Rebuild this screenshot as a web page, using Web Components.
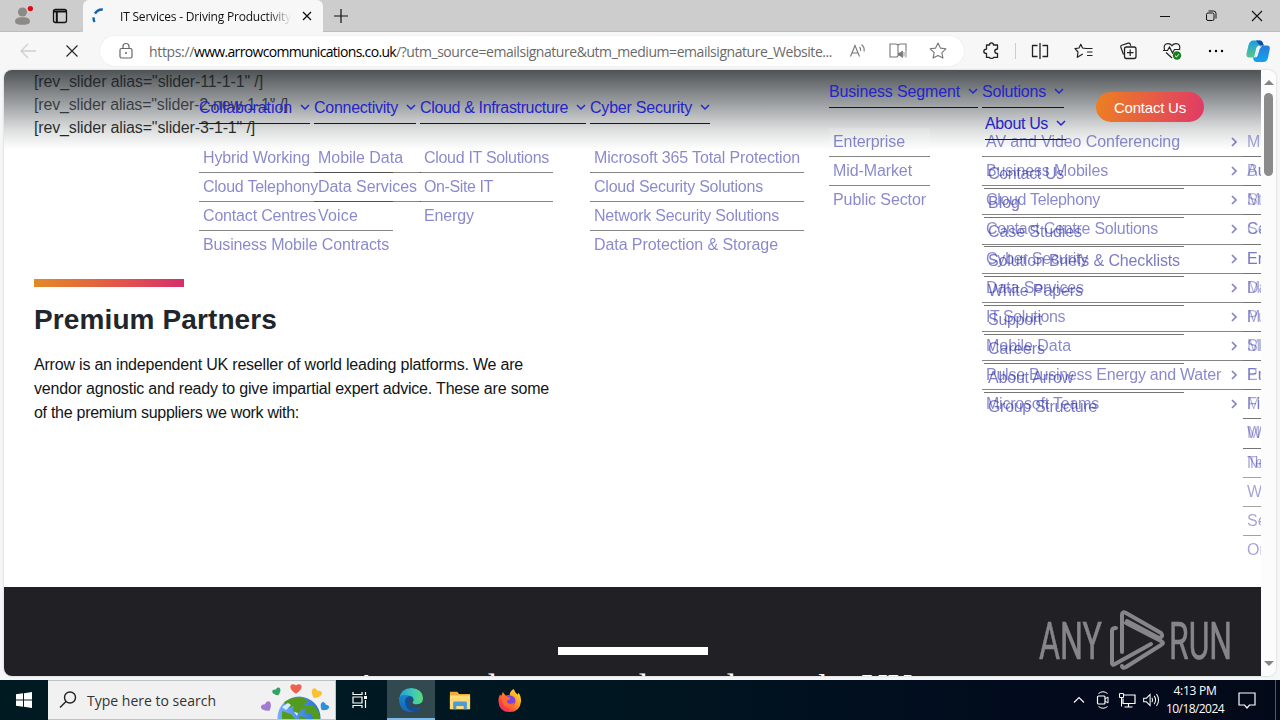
<!DOCTYPE html>
<html lang="en">
<head>
<meta charset="utf-8">
<title>IT Services - Driving Productivity</title>
<style>
    html, body {
        margin: 0;
        width: 1280px;
        height: 720px;
        overflow: hidden;
        background: #eef4f9;
        font-family: "Liberation Sans", Arial, sans-serif;
    }
</style>
</head>
<body>
<desktop-shell></desktop-shell>

<script>
const ICONS = {
    profile: '<circle cx="12" cy="8" r="5.2" fill="#8c8987"/><path d="M3.5 19c0-4 3-5 8.500-5s8.500 1 8.500 5c0 2.500-4 3.500-8.500 3.500S3.500 21.500 3.500 19z" fill="#8c8987"/><circle cx="21" cy="4" r="3" fill="#e30613"/>',
    tabs: '<rect x="5.500" y="5.500" width="13" height="13" rx="2" fill="none" stroke="#111" stroke-width="1.300"/><path d="M5.500 7.500h13M8.800 8v10" stroke="#111" stroke-width="2" fill="none"/>',
    spinner: '<path d="M7.800 18.500a9 9 0 0 1-1-5M8.300 9.500a9 9 0 0 1 8.500-4.500" transform="translate(1.500 0)" fill="none" stroke="#1464ad" stroke-width="2.700"/>',
    close: '<path d="M8 8l8 8M16 8l-8 8" stroke="#111" stroke-width="1.300"/>',
    stop: '<path d="M6 6l12 12M18 6L6 18" stroke="#222" stroke-width="1.200"/>',
    plus: '<path d="M12 5v14M5 12h14" stroke="#111" stroke-width="1.200"/>',
    min: '<path d="M7 12.500h10" stroke="#111"/>',
    restore: '<rect x="7.500" y="9" width="7.500" height="7.500" rx="1.500" fill="none" stroke="#111"/><path d="M9.500 7h5q2.500 0 2.500 2.500v5" fill="none" stroke="#111"/>',
    winclose: '<path d="M7 7l10 10M17 7L7 17" stroke="#111" stroke-width="1.100"/>',
    back: '<path d="M20 12H5M12 5l-7 7 7 7" fill="none" stroke="#cfcfcf" stroke-width="1.300"/>',
    lock: '<rect x="6" y="9.500" width="12" height="9.500" rx="1.500" fill="none" stroke="#666" stroke-width="1.200"/><path d="M9 9.500V7.500a3 3 0 0 1 6 0v2" fill="none" stroke="#666" stroke-width="1.200"/><circle cx="12" cy="14" r="1" fill="#666"/>',
    read: '<path d="M4.500 17.500L9 6.500l4.500 11M6 14h6M13.500 8q1.500 1.500 1 4M15.500 5.500q3.500 3 2.500 7" fill="none" stroke="#777" stroke-width="1.100"/>',
    book: '<path d="M12 6v11M12 6q-1-1-3-1H4v13h7l1-1M12 6q1-1 3-1h5v7" fill="none" stroke="#777" stroke-width="1.100"/><path d="M12.500 14h1.500l2.500-2v6.500L14 16.500h-1.500zM18 13v4.500M20 12v6.500" fill="#777" stroke="#777" stroke-width=".8"/>',
    star: '<path d="M12 4l2.400 5.100 5.500.7-4 3.800 1 5.500-4.900-2.700-4.900 2.700 1-5.500-4-3.800 5.500-.7z" fill="none" stroke="#777" stroke-width="1.100" stroke-linejoin="round"/>',
    puzzle: '<path d="M7.500 6h3q0-2.200 2-2.200T14.500 6h4v4q-2.700 0-2.700 2.200t2.700 2.200v4h-4q0 1-2 1t-2-1h-3v-4q-2.700 0-2.700-2t2.700-2.200z" fill="none" stroke="#222" stroke-width="1.300" stroke-linejoin="round"/>',
    split: '<path d="M9.500 6.500h-5v11h5M14.500 6.500h5v11h-5M12 4v16" fill="none" stroke="#222" stroke-width="1.300" stroke-linejoin="round"/>',
    favs: '<path d="M12.500 9.500h7M14 13h5.500M14 16.500h5.500M12.500 9.300l-3-.3L7.800 5.300 6 9l-4 .6L5 13l-.7 5.300 5.500-3.300" transform="translate(1 0)" fill="none" stroke="#222" stroke-width="1.200" stroke-linejoin="round"/>',
    collect: '<path d="M7.500 15.500L4.800 8.200q-.5-1.400 1-2l6.400-2q1.500-.4 2 1l.6 1.600" fill="none" stroke="#222" stroke-width="1.200"/><rect x="8.500" y="8" width="11.500" height="11.500" rx="2" fill="none" stroke="#222" stroke-width="1.300"/><path d="M14.200 10.500v6.500M11 13.700h6.500" stroke="#222" stroke-width="1.200"/>',
    heart: '<path d="M4.500 11q-1.500-6.300 3.500-6.300 2.500 0 4 2 1.500-2 4-2 5 0 3.500 6.300M6 13.500l6 5.500M3 11.500h4.500L9.500 8l3 6 2-3.500H20" fill="none" stroke="#222" stroke-width="1.200"/><circle cx="17" cy="16.500" r="4.200" fill="#16801c"/><path d="M15 16.700l1.500 1.300 2.500-2.800" stroke="#fff" fill="none"/>',
    dots: '<circle cx="6" cy="12" r="1.200"/><circle cx="12" cy="12" r="1.200"/><circle cx="18" cy="12" r="1.200"/>',
    copilot: '<path d="M7 1.500h7q2 0 2.700 2l1 3h-4q-2.700 0-3.500 3l-1.500 6.500q-.5 2.500-2.500 2.500H3Q0 18.500.5 14.500l2-8.500Q4 1.500 7 1.500z" fill="url(#ca)"/><path d="M17 6.500h4q3.500 0 2.700 4L22 18.500q-1 4.500-4.500 4.500H10q-2 0-2.700-3l-.3-1.500q2.500-.5 3-2l2-7Q14.500 6.500 17 6.500z" fill="url(#cb)"/><path d="M10 1.500h4q2 0 2.700 2l1 3h-4z" fill="#1b4b9e"/><path d="M13.700 7.500h2.500q-2 .5-2.700 3l-1.800 6q-.6 2-2.500 2H8q1.500-.5 2-2.500l1.500-6q.7-2.500 2.200-2.500z" fill="#f3f8fc"/><defs><linearGradient id="ca" x2="0" y2="1"><stop stop-color="#1b9de2"/><stop offset="1" stop-color="#54c987"/></linearGradient><linearGradient id="cb" x2="0" y2="1"><stop stop-color="#2b7bd8"/><stop offset="1" stop-color="#12a4ef"/></linearGradient></defs>',
    windows: '<path d="M4 6.300l7-1v6.200H4zM12 5.200l8-1.200v7.500h-8zM4 12.500h7v6.200l-7-1zM12 12.500h8V20l-8-1.200z" fill="#fff"/>',
    search: '<circle cx="14" cy="9.500" r="5.500" fill="none" stroke="#222" stroke-width="1.400"/><path d="M10 13.500L4 19.500" stroke="#222" stroke-width="1.500"/>',
    taskview: '<path d="M5 4v2.500h9V4M5 20v-2.500h9V20M5 9h9v6H5zM17.500 4v3M17.500 12v8" fill="none" stroke="#fff" stroke-width="1.200"/><path d="M16 8h3v3h-3z" fill="#fff"/>',
    edge: '<defs><linearGradient id="ea"><stop stop-color="#239ddf"/><stop offset=".65" stop-color="#42cdb0"/><stop offset="1" stop-color="#62d875"/></linearGradient><linearGradient id="eb" x2="0" y2="1"><stop stop-color="#1686cb"/><stop offset="1" stop-color="#1767b5"/></linearGradient></defs><path d="M0 11Q2 0 12.500 0 23.500 1 24 10q0 6-6 6.300-5 0-4.300-2.300Q16 11.500 13 9.500 8 6 0 11z" fill="url(#ea)"/><path d="M0 12q0-5 6-5 6.500 0 8 4-5-2-5 3 1 6.500 7.500 6.500 3 0 5-1.500-3.500 5-9.500 5Q1 24 0 12z" fill="url(#eb)"/><path d="M6 13q1-6 7-4.500l1.500 2.500q-5-1-5 3.500Q11 20 17 20.500q3 0 5-1.500-3 4.500-8.500 4.800Q6 21 6 13z" fill="#124f98"/>',
    folder: '<path d="M1 3h8l2 2.500h12V22H1z" fill="#efad34"/><path d="M1 7h22v15H1z" fill="#ffdb78"/><path d="M4.500 22v-7q0-1.500 1.500-1.500h12q1.500 0 1.500 1.500v7h-3.500v-3.500H8V22z" fill="#4e9bd3"/>',
    firefox: '<defs><linearGradient id="fa" x1="1" x2="0" y2="1"><stop stop-color="#fff044"/><stop offset=".4" stop-color="#ff9b1d"/><stop offset=".75" stop-color="#ff3b4a"/><stop offset="1" stop-color="#e3257b"/></linearGradient></defs><path d="M2 6l1.500 1L5 3l3 4q3-1 4 0 0-5 4.500-7 1 4 4 6l1-2q3 4 2.500 9-1 11-12 11T.5 13Q.3 9 2 6z" fill="url(#fa)"/><circle cx="12.500" cy="12.500" r="5.800" fill="#7b45dd"/><path d="M4 9q4-3 6.500-.3L13 9q-.5 2.500-3.500 3-.5 3 3 3.500 3 0 5-1.500-2 5.500-7 5.200Q4 18 4 9z" fill="#ff6a2c"/>',
    up: '<path d="M6 15l6-6 6 6" fill="none" stroke="#fff" stroke-width="1.300"/>',
    cam: '<rect x="6.500" y="8" width="7.500" height="8" rx="1" fill="none" stroke="#fff" stroke-width="1.200"/><path d="M14 11l3-2v6l-3-2M7.500 5.500q4.500-3.500 9 0M7.500 18.500q4.500 3.500 9 0" fill="none" stroke="#fff"/>',
    net: '<path d="M9 7h11v8.500H8v-5M13.500 15.500V19M9.500 19h8" fill="none" stroke="#fff" stroke-width="1.200"/><path d="M4.500 5.500h4v4h-4zM6.500 9.500v9" fill="none" stroke="#fff"/>',
    sound: '<path d="M4 10h3l4-4v12l-4-4H4zM13 9.500q1.500 2.500 0 5M15.500 7.500q3 4.500 0 9M18 5.500q4.500 6.500 0 13" fill="none" stroke="#fff" stroke-width="1.100"/>',
    note: '<path d="M4 5h16v12h-5.500L12 20l-2.500-3H4z" fill="none" stroke="#fff" stroke-width="1.200"/>'
};

class UiIcon extends HTMLElement {
    constructor() {
        super();
        this.attachShadow({mode: 'open'});
    }

    connectedCallback() {
        const size = this.getAttribute('size') || 24;
        this.shadowRoot.innerHTML = `
            <style>
                :host { display: flex; align-items: center; justify-content: center; flex: none; }
                svg { display: block; overflow: visible; }
            </style>
            <svg width="${size}" height="${size}" viewBox="0 0 24 24">${ICONS[this.getAttribute('name')]}</svg>
        `;
    }
}

// Text set to a known advance width by spreading the difference over its letters
class FitText extends HTMLElement {
    constructor() {
        super();
        this.attachShadow({mode: 'open'});
        this.shadowRoot.innerHTML = `
            <style>
                :host { display: block; white-space: nowrap; flex: none; }
                span { display: inline-block; white-space: pre; }
            </style>
            <span><slot></slot></span>
        `;
    }

    connectedCallback() {
        const w = parseFloat(this.getAttribute('w'));
        if (!w) return;
        this.style.width = w + 'px';
        const span = this.shadowRoot.querySelector('span');
        const n = this.textContent.length;
        span.style.letterSpacing = (w - span.getBoundingClientRect().width) / n + 'px';
    }
}

class TabStrip extends HTMLElement {
    constructor() {
        super();
        this.attachShadow({mode: 'open'});
        this.shadowRoot.innerHTML = `
            <style>
                :host { display: flex; height: 32px; background: #cdcdcd; font: 12px "Open Sans", "Noto Sans", sans-serif; }
                .left { display: flex; width: 83px; box-sizing: border-box; border-bottom: 1px solid #bcbcbc; border-radius: 0 0 5px 0; }
                .tab { display: flex; align-items: center; width: 240px; background: #f7f7f7; border-radius: 6px 6px 0 0; }
                .title { width: 173px; margin-left: 10px; color: #111; -webkit-mask: linear-gradient(90deg, #000 86%, transparent 99%); mask: linear-gradient(90deg, #000 86%, transparent 99%); }
                .rest { display: flex; flex: 1; border-bottom: 1px solid #bcbcbc; }
                .gap { flex: 1; }
            </style>
            <div class="left">
                <ui-icon name="profile" size="21" style="width:44px"></ui-icon>
                <ui-icon name="tabs" style="width:32px"></ui-icon>
            </div>
            <div class="tab">
                <ui-icon name="spinner" size="22" style="width:27px"></ui-icon>
                <div class="title"><fit-text w="171">IT Services - Driving Productivity</fit-text></div>
                <ui-icon name="close" style="width:28px"></ui-icon>
            </div>
            <div class="rest">
                <ui-icon name="plus" style="width:36px"></ui-icon>
                <div class="gap"></div>
                <ui-icon name="min" style="width:46px"></ui-icon>
                <ui-icon name="restore" style="width:46px"></ui-icon>
                <ui-icon name="winclose" style="width:46px"></ui-icon>
            </div>
        `;
    }
}

class ToolBar extends HTMLElement {
    constructor() {
        super();
        this.attachShadow({mode: 'open'});
        this.shadowRoot.innerHTML = `
            <style>
                :host { display: flex; align-items: center; height: 38px; box-sizing: border-box; padding-left: 6px; background: #f7f7f7; }
                ui-icon { width: 44px; }
                .address { display: flex; align-items: center; width: 864px; height: 30px; box-sizing: border-box; margin: 0 5px 0 6px; padding-left: 8px; background: #fff; border-radius: 15px; box-shadow: 0 0 2px #e4e4e4; font: 14px "Open Sans", "Noto Sans", sans-serif; color: #6a6a6a; }
                .address ui-icon { width: 40px; }
                .url { display: flex; width: 689px; margin-left: 5px; }
                .host { color: #000; }
                .sep { width: 1px; height: 16px; margin: 0 2px; background: #ccc; }
            </style>
            <ui-icon name="back"></ui-icon>
            <ui-icon name="stop" size="22"></ui-icon>
            <div class="address">
                <ui-icon name="lock" style="width:36px"></ui-icon>
                <div class="url">
                    <fit-text w="45">https://</fit-text><fit-text w="202" class="host">www.arrowcommunications.co.uk</fit-text><fit-text w="436">/?utm_source=emailsignature&amp;utm_medium=emailsignature_Website...</fit-text>
                </div>
                <ui-icon name="read"></ui-icon>
                <ui-icon name="book"></ui-icon>
                <ui-icon name="star"></ui-icon>
            </div>
            <ui-icon name="puzzle"></ui-icon>
            <div class="sep"></div>
            <ui-icon name="split"></ui-icon>
            <ui-icon name="favs"></ui-icon>
            <ui-icon name="collect"></ui-icon>
            <ui-icon name="heart"></ui-icon>
            <ui-icon name="dots"></ui-icon>
            <ui-icon name="copilot" style="width:40px"></ui-icon>
        `;
    }
}

// rows: "label:width" separated by "|"
class SubMenu extends HTMLElement {
    constructor() {
        super();
        this.attachShadow({mode: 'open'});
    }

    connectedCallback() {
        const arrows = this.hasAttribute('arrows');
        const rows = this.getAttribute('rows').split('|').map(row => {
            const [label, w] = row.split(':');
            return `<li><fit-text w="${w || 0}">${label.replace('&', '&amp;')}</fit-text>${arrows ? '<svg width="8" height="12" viewBox="0 0 8 12"><path d="M1 2l4 4-4 4" fill="none" stroke="#1c1ca8" stroke-width="1.700"/></svg>' : ''}</li>`;
        }).join('');
        this.shadowRoot.innerHTML = `
            <style>
                :host { display: block; position: absolute; opacity: .55; font-size: 16px; color: #2929a4; }
                ul { list-style: none; margin: 0; padding: 0; }
                li { display: flex; align-items: center; justify-content: space-between; height: 29.150px; box-sizing: border-box; padding: 0 4px; border-bottom: 1px solid #222; }
                li:last-child { border-bottom-color: transparent; }
            </style>
            <ul>${rows}</ul>
        `;
    }
}

class NavItem extends HTMLElement {
    constructor() {
        super();
        this.attachShadow({mode: 'open'});
        this.shadowRoot.innerHTML = `
            <style>
                :host { display: block; position: relative; flex: none; }
                .top { display: flex; align-items: center; gap: 8px; height: 32px; border-bottom: 1px solid #15191d; color: #2424c8; font-size: 16px; }
                .top fit-text { padding-top: 2px; }
            </style>
            <div class="top">
                <fit-text w="${this.getAttribute('w')}">${this.getAttribute('label').replace('&', '&amp;')}</fit-text>
                <svg width="10" height="8" viewBox="0 0 10 8"><path d="M1 2l4 4 4-4" fill="none" stroke="#2424c8" stroke-width="1.500"/></svg>
            </div>
            <slot></slot>
        `;
    }
}

class SiteHeader extends HTMLElement {
    constructor() {
        super();
        this.attachShadow({mode: 'open'});
        this.shadowRoot.innerHTML = `
            <style>
                :host { display: flex; align-items: flex-start; position: absolute; inset: 0 0 auto 0; height: 80px; background: linear-gradient(rgba(24,30,34,.77), rgba(90,96,101,.56) 45%, rgba(110,118,116,.22) 76%, rgba(255,255,255,0)); }
                nav { display: flex; gap: 4px; }
                .main { margin: 21px 0 0 195px; width: 511px; }
                .side { margin: 5px 0 0 119px; width: 235px; flex-wrap: wrap; gap: 0 4px; }
                .btn { display: flex; align-items: center; justify-content: center; width: 108px; height: 30px; margin: 22px 0 0 32px; border-radius: 15px; background: linear-gradient(100deg, #ec8021, #e03a67); color: #fff; font-size: 15px; }
            </style>
            <nav class="main">
                <nav-item label="Collaboration" w="93"><sub-menu style="left:0;top:53px;width:194px" rows="Hybrid Working:107|Cloud Telephony:115|Contact Centres:113|Business Mobile Contracts:186"></sub-menu></nav-item>
                <nav-item label="Connectivity" w="84"><sub-menu style="left:0;top:53px;width:107px" rows="Mobile Data:85|Data Services:99|Voice:40"></sub-menu></nav-item>
                <nav-item label="Cloud &amp; Infrastructure" w="148"><sub-menu style="left:0;top:53px;width:133px" rows="Cloud IT Solutions:125|On-Site IT:69|Energy:50"></sub-menu></nav-item>
                <nav-item label="Cyber Security" w="102"><sub-menu style="left:0;top:53px;width:214px" rows="Microsoft 365 Total Protection:206|Cloud Security Solutions:169|Network Security Solutions:185|Data Protection &amp; Storage:184"></sub-menu></nav-item>
            </nav>
            <nav class="side">
                <nav-item label="Business Segment" w="131"><sub-menu style="left:0;top:53px;width:101px;background:rgba(255,255,255,.25)" rows="Enterprise:72|Mid-Market:79|Public Sector:93"></sub-menu></nav-item>
                <nav-item label="Solutions" w="64">
                    <sub-menu arrows style="left:0;top:53px;width:261px" rows="AV and Video Conferencing:194|Business Mobiles:122|Cloud Telephony:114|Contact Centre Solutions:172|Cyber Security:102|Data Services:98|IT Solutions:79|Mobile Data:85|Pulse Business Energy and Water:235|Microsoft Teams:113"></sub-menu>
                    <sub-menu style="left:261px;top:53px;width:60px;opacity:.42" rows="Managed|Business|Mobile|Call|Energy|Data|Microsoft|SIP|Energy|Fibre|Web|Network|Wi-Fi|Security|On-Site"></sub-menu>
                    <sub-menu style="left:261px;top:53px;width:60px;opacity:.35" rows=" |Audio|Standard|Security|Email|Mitel|Pulse|Mobile|Pulse|Microsoft|Meetings|Teams"></sub-menu>
                </nav-item>
                <nav-item label="About Us" w="63" style="margin-left:156px;top:-1px"><sub-menu style="left:-1px;top:53px;width:200px;opacity:.62" rows="Contact Us:76|Blog:32|Case Studies:94|Solution Briefs &amp; Checklists:192|White Papers:95|Support:54|Careers:57|About Arrow:85|Group Structure:109"></sub-menu></nav-item>
            </nav>
            <div class="btn"><fit-text w="72">Contact Us</fit-text></div>
        `;
    }
}

class SitePage extends HTMLElement {
    constructor() {
        super();
        this.attachShadow({mode: 'open'});
        this.shadowRoot.innerHTML = `
            <style>
                :host { display: block; position: relative; flex: 1; overflow: hidden; background: #fff; color: #111518; font-size: 16px; }
                .intro { height: 517px; box-sizing: border-box; padding-left: 30px; }
                .codes { height: 209px; line-height: 23px; }
                .bar { width: 150px; height: 8px; background: linear-gradient(90deg, #e28a26, #e3524c 60%, #d62e6d); }
                h2 { margin: 16px 0 16px; font-size: 28px; line-height: 34px; color: #20262b; }
                p { margin: 0; line-height: 24px; }
                .dark { display: flex; flex-direction: column; align-items: center; height: 120px; padding-top: 60px; box-sizing: border-box; background: #212024; color: #fff; }
                .rule { width: 150px; height: 8px; flex: none; background: #fff; margin-left: 1px; }
                .claim { display: flex; gap: 9px; height: 40px; margin: 12px 0 0 2px; flex: none; font: 36px/40px "Liberation Serif", serif; }
            </style>
            <div class="intro">
                <div class="codes">
                    <fit-text w="229">[rev_slider alias="slider-11-1-1" /]</fit-text>
                    <fit-text w="254">[rev_slider alias="slider-2-new-1-1" /]</fit-text>
                    <fit-text w="221">[rev_slider alias="slider-3-1-1" /]</fit-text>
                </div>
                <div class="bar"></div>
                <h2><fit-text w="243">Premium Partners</fit-text></h2>
                <p>
                    <fit-text w="489">Arrow is an independent UK reseller of world leading platforms. We are</fit-text>
                    <fit-text w="515">vendor agnostic and ready to give impartial expert advice. These are some</fit-text>
                    <fit-text w="265">of the premium suppliers we work with:</fit-text>
                </p>
            </div>
            <div class="dark">
                <div class="rule"></div>
                <div class="claim">
                    <fit-text w="144">Accessed</fit-text><fit-text w="32">our</fit-text><fit-text w="100">around</fit-text><fit-text w="18">a</fit-text><fit-text w="52">and</fit-text><fit-text w="55">over</fit-text><fit-text w="44">the</fit-text><fit-text w="52">UK</fit-text>
                </div>
            </div>
            <site-header></site-header>
        `;
    }
}

class ScrollBar extends HTMLElement {
    constructor() {
        super();
        this.attachShadow({mode: 'open'});
        this.shadowRoot.innerHTML = `
            <style>
                :host { display: flex; flex-direction: column; align-items: center; width: 15px; background: #fcfcfc; }
                .thumb { width: 9px; height: 83px; margin: 5px 0 auto; border-radius: 5px; background: #8b8b8b; }
                svg { display: block; margin: 10px 0 0; }
                svg:last-child { margin: 0 0 9px; }
            </style>
            <svg width="10" height="8"><path d="M0 5l5-5 5 5z" fill="#858585"/></svg>
            <div class="thumb"></div>
            <svg width="10" height="6"><path d="M0 0h10L5 5z" fill="#858585"/></svg>
        `;
    }
}

class WaterMark extends HTMLElement {
    constructor() {
        super();
        this.attachShadow({mode: 'open'});
        this.shadowRoot.innerHTML = `
            <style>
                :host { display: block; position: absolute; left: 1036px; top: 606px; opacity: .56; }
                svg { display: block; }
                text { font: 400 52px Roboto, sans-serif; fill: #d5d5d5; stroke: #d5d5d5; stroke-width: .6px; }
            </style>
            <svg width="200" height="68" viewBox="0 0 200 68">
                <text x="3" y="53" textLength="63" lengthAdjust="spacingAndGlyphs">ANY</text>
                <text x="133" y="53" textLength="63" lengthAdjust="spacingAndGlyphs">RUN</text>
                <g fill="none" stroke="#d5d5d5" stroke-width="4" stroke-linejoin="round" stroke-linecap="round">
                    <path d="M86 46V9q0-4 4-2l35 20q3 4-2 5L91 15"/>
                    <path d="M80 22q-4 0-4 3v32q0 3 3 1l36-20"/>
                    <path d="M90 17l35 18q4 2 0 4L90 61q-4 2-4-1"/>
                </g>
            </svg>
        `;
    }
}

class BrowserWindow extends HTMLElement {
    constructor() {
        super();
        this.attachShadow({mode: 'open'});
        this.shadowRoot.innerHTML = `
            <style>
                :host { display: flex; flex-direction: column; height: 680px; box-sizing: border-box; padding-bottom: 4px; background: #f4f6f8; }
                .view { display: flex; flex: 1; min-height: 0; margin: 0 4px; border-radius: 8px; overflow: hidden; box-shadow: 0 0 2px #bbb; }
            </style>
            <tab-strip></tab-strip>
            <tool-bar></tool-bar>
            <div class="view"><site-page></site-page><scroll-bar></scroll-bar></div>
        `;
    }
}

class TaskBar extends HTMLElement {
    constructor() {
        super();
        this.attachShadow({mode: 'open'});
        this.shadowRoot.innerHTML = `
            <style>
                :host { display: flex; height: 40px; background: linear-gradient(90deg, #001a22, #001721 45%, #020b1d 80%, #020a1a); font: 14px "Open Sans", "Noto Sans", sans-serif; }
                ui-icon { width: 48px; height: 40px; }
                .search { display: flex; align-items: center; width: 288px; box-sizing: border-box; border: 1px solid #bfc3c4; border-left: 0; background: #f1f1f1; color: #333; }
                .art { margin-left: 42px; align-self: stretch; }
                .on { margin-left: 3px; margin-right: 1px; background: #334950; box-shadow: inset 0 -2px #7cb9e8; }
                .gap { flex: 1; }
                .tray { width: 24px; }
                .clock { display: flex; flex-direction: column; justify-content: center; align-items: center; width: 64px; height: 36px; margin-top: 2px; color: #fff; font-size: 12px; line-height: 18px; }
                .peek { width: 4px; margin-left: 8px; border-left: 1px solid #4f5968; }
            </style>
            <ui-icon name="windows"></ui-icon>
            <div class="search">
                <ui-icon name="search" style="width:39px"></ui-icon>
                <fit-text w="129">Type here to search</fit-text>
                <svg class="art" width="76" height="38" viewBox="258 681 76 38">
                    <defs><linearGradient id="sea"><stop stop-color="#75aef8"/><stop offset="1" stop-color="#2772cf"/></linearGradient></defs>
                    <circle cx="299" cy="718" r="21.500" fill="url(#sea)"/>
                    <path d="M284 702l8-4q8-2 14 1l2 3-4 2 3 4-5 1-4 5-5-4 1-4-6 2zM306 706l7-1q7 6 7 14h-6l-3-5-6-1zM282 711l9 3 5 6h-14zM299 716l6 1 2 3h-8z" fill="#539b20"/>
                    <path d="M282 707l6-4 3 2-5 5zM294 712l4 1-1 3z" fill="#d8ecff"/>
                    <path d="M0 4.500C-9-1-5-7 0-3.500 5-7 9-1 0 4.500z" transform="translate(296 689) scale(1.050)" fill="#ee614f"/>
                    <path d="M0 4.500C-9-1-5-7 0-3.500 5-7 9-1 0 4.500z" transform="translate(277 692) rotate(-25) scale(.8)" fill="#32a368"/>
                    <path d="M0 4.500C-9-1-5-7 0-3.500 5-7 9-1 0 4.500z" transform="translate(316 694) rotate(28)" fill="#fac130"/>
                    <path d="M0 4.500C-9-1-5-7 0-3.500 5-7 9-1 0 4.500z" transform="translate(267 707) rotate(-35)" fill="#a37ad1"/>
                    <path d="M0 4.500C-9-1-5-7 0-3.500 5-7 9-1 0 4.500z" transform="translate(324 707) rotate(38) scale(.85)" fill="#2b91dd"/>
                </svg>
            </div>
            <ui-icon name="taskview"></ui-icon>
            <ui-icon name="edge" class="on"></ui-icon>
            <ui-icon name="folder" size="22"></ui-icon>
            <ui-icon name="firefox" size="23" style="width:50px"></ui-icon>
            <div class="gap"></div>
            <ui-icon class="tray" name="up" size="20"></ui-icon>
            <ui-icon class="tray" name="cam"></ui-icon>
            <ui-icon class="tray" name="net"></ui-icon>
            <ui-icon class="tray" name="sound" size="22"></ui-icon>
            <div class="clock"><fit-text w="43">4:13 PM</fit-text><fit-text w="58">10/18/2024</fit-text></div>
            <ui-icon name="note" style="width:40px"></ui-icon>
            <div class="peek"></div>
        `;
    }
}

class DesktopShell extends HTMLElement {
    constructor() {
        super();
        this.attachShadow({mode: 'open'});
        this.shadowRoot.innerHTML = `
            <style>
                :host { display: grid; grid-template-rows: 680px 40px; position: relative; width: 1280px; height: 720px; overflow: hidden; }
            </style>
            <browser-window></browser-window>
            <task-bar></task-bar>
            <water-mark></water-mark>
        `;
    }
}

customElements.define('ui-icon', UiIcon);
customElements.define('fit-text', FitText);
customElements.define('tab-strip', TabStrip);
customElements.define('tool-bar', ToolBar);
customElements.define('sub-menu', SubMenu);
customElements.define('nav-item', NavItem);
customElements.define('site-header', SiteHeader);
customElements.define('site-page', SitePage);
customElements.define('scroll-bar', ScrollBar);
customElements.define('water-mark', WaterMark);
customElements.define('browser-window', BrowserWindow);
customElements.define('task-bar', TaskBar);
customElements.define('desktop-shell', DesktopShell);
</script>
</body>
</html>
